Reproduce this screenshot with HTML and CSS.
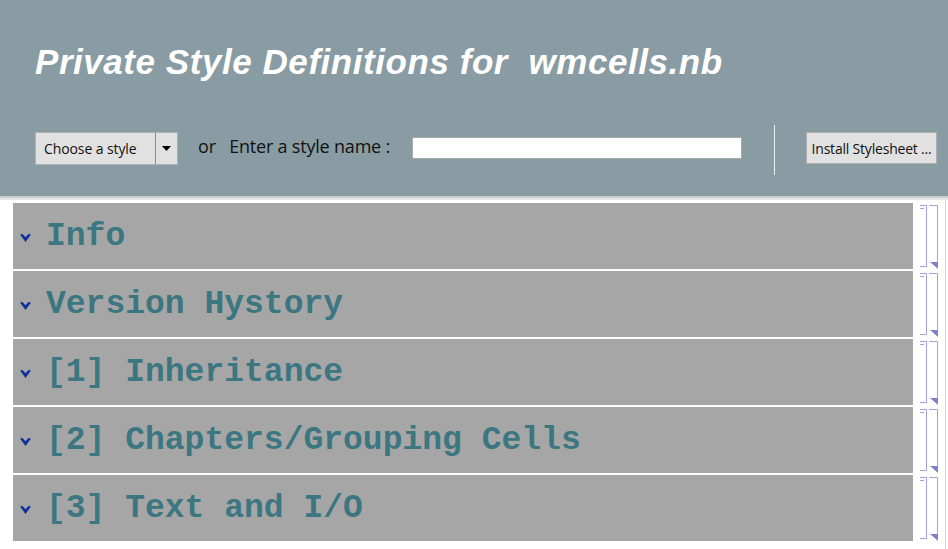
FILE: index.html
```html
<!DOCTYPE html>
<html>
<head>
<meta charset="utf-8">
<link rel="stylesheet" href="styles.css">
</head>
<body>
<div class="header">
  <h1 class="title">Private Style Definitions for&nbsp; wmcells.nb</h1>
  <div class="controls">
    <div class="popup">
      <span class="popup-label">Choose a style</span>
      <span class="popup-arrow"><svg width="9" height="5" viewBox="0 0 9 5"><path d="M0 0H9L4.5 5Z" fill="#000"/></svg></span>
    </div>
    <span class="or">or</span>
    <span class="enter">Enter a style name :</span>
    <div class="field"></div>
    <div class="divider"></div>
    <div class="install">Install Stylesheet ...</div>
  </div>
</div>
<div class="band1"></div>
<div class="band2"></div>
<div class="cells">
  <div class="row"><div class="cell"><svg class="chev" width="11" height="8" viewBox="0 0 11 8"><path d="M0 0.5L2.5 0L5.5 3.2L8.5 0L11 0.5L5.5 8Z" fill="#0f2f9a"/></svg><span class="name">Info</span></div><svg class="br" width="32" height="66" viewBox="0 0 32 66"><path d="M7 2.5H13.5V63.5H7M7 5.5H11" stroke="#a0a0dc" fill="none"/><path d="M16 2.5H24.5V64" stroke="#a0a0dc" fill="none"/><path d="M17 59H25V66Z" fill="#8080cc"/></svg></div>
  <div class="row"><div class="cell"><svg class="chev" width="11" height="8" viewBox="0 0 11 8"><path d="M0 0.5L2.5 0L5.5 3.2L8.5 0L11 0.5L5.5 8Z" fill="#0f2f9a"/></svg><span class="name">Version Hystory</span></div><svg class="br" width="32" height="66" viewBox="0 0 32 66"><path d="M7 2.5H13.5V63.5H7M7 5.5H11" stroke="#a0a0dc" fill="none"/><path d="M16 2.5H24.5V64" stroke="#a0a0dc" fill="none"/><path d="M17 59H25V66Z" fill="#8080cc"/></svg></div>
  <div class="row"><div class="cell"><svg class="chev" width="11" height="8" viewBox="0 0 11 8"><path d="M0 0.5L2.5 0L5.5 3.2L8.5 0L11 0.5L5.5 8Z" fill="#0f2f9a"/></svg><span class="name">[1] Inheritance</span></div><svg class="br" width="32" height="66" viewBox="0 0 32 66"><path d="M7 2.5H13.5V63.5H7M7 5.5H11" stroke="#a0a0dc" fill="none"/><path d="M16 2.5H24.5V64" stroke="#a0a0dc" fill="none"/><path d="M17 59H25V66Z" fill="#8080cc"/></svg></div>
  <div class="row"><div class="cell"><svg class="chev" width="11" height="8" viewBox="0 0 11 8"><path d="M0 0.5L2.5 0L5.5 3.2L8.5 0L11 0.5L5.5 8Z" fill="#0f2f9a"/></svg><span class="name">[2] Chapters/Grouping Cells</span></div><svg class="br" width="32" height="66" viewBox="0 0 32 66"><path d="M7 2.5H13.5V63.5H7M7 5.5H11" stroke="#a0a0dc" fill="none"/><path d="M16 2.5H24.5V64" stroke="#a0a0dc" fill="none"/><path d="M17 59H25V66Z" fill="#8080cc"/></svg></div>
  <div class="row"><div class="cell"><svg class="chev" width="11" height="8" viewBox="0 0 11 8"><path d="M0 0.5L2.5 0L5.5 3.2L8.5 0L11 0.5L5.5 8Z" fill="#0f2f9a"/></svg><span class="name">[3] Text and I/O</span></div><svg class="br" width="32" height="66" viewBox="0 0 32 66"><path d="M7 2.5H13.5V63.5H7M7 5.5H11" stroke="#a0a0dc" fill="none"/><path d="M16 2.5H24.5V64" stroke="#a0a0dc" fill="none"/><path d="M17 59H25V66Z" fill="#8080cc"/></svg></div>
</div>
<div class="scrollline"></div>
</body>
</html>
```
FILE: styles.css
```css
html, body {
  margin: 0;
  padding: 0;
  background: #ffffff;
  width: 948px;
  height: 549px;
  overflow: hidden;
  position: relative;
}
.header {
  height: 196px;
  background: #8a9ca3;
  box-sizing: border-box;
  padding: 40px 0 0 35px;
}
.title {
  margin: 0;
  font-family: "Liberation Sans", Arial, sans-serif;
  font-weight: bold;
  font-style: italic;
  font-size: 35px;
  line-height: 44px;
  color: #ffffff;
  letter-spacing: 0.55px;
}
.controls {
  display: flex;
  align-items: center;
  margin-top: 39px;
  height: 50px;
  font-family: "Open Sans", "Noto Sans", sans-serif;
}
.popup {
  display: flex;
  width: 143px;
  height: 33px;
  box-sizing: border-box;
  border: 1px solid #b0b0b0;
  background: #e1e1e1;
}
.popup-label {
  flex: 1;
  font-size: 14px;
  color: #111;
  display: flex;
  align-items: center;
  padding-left: 8px;
  letter-spacing: -0.1px;
  border-right: 1px solid #8a8a8a;
}
.popup-arrow {
  width: 21px;
  display: flex;
  align-items: center;
  justify-content: center;
}
.or {
  font-size: 18px;
  color: #111;
  margin-left: 20px;
  margin-top: -4px;
}
.enter {
  font-size: 18px;
  color: #111;
  margin-left: 13px;
  margin-top: -4px;
  letter-spacing: -0.2px;
}
.field {
  width: 330px;
  height: 22px;
  box-sizing: border-box;
  border: 1px solid #a8a8a8;
  background: #ffffff;
  margin-left: 22px;
}
.divider {
  width: 1px;
  height: 50px;
  background: #f0f0f0;
  margin-left: 32px;
  margin-top: 4px;
}
.install {
  margin-left: 31px;
  width: 131px;
  height: 32px;
  box-sizing: border-box;
  border: 1px solid #b0b0b0;
  background: #e1e1e1;
  font-size: 14px;
  color: #111;
  display: flex;
  align-items: center;
  justify-content: center;
  letter-spacing: -0.2px;
  white-space: nowrap;
}
.band1 {
  height: 2px;
  background: #c9cdd0;
}
.band2 {
  height: 2px;
  background: #e4e6e7;
}
.cells {
  padding: 3px 0 0 13px;
  display: flex;
  flex-direction: column;
  gap: 2px;
}
.row {
  display: flex;
  height: 66px;
}
.cell {
  width: 900px;
  height: 66px;
  background: #a6a6a6;
  display: flex;
  align-items: center;
}
.chev {
  margin-left: 7px;
  margin-top: 4px;
  flex: none;
}
.name {
  margin-left: 15px;
  font-family: "Liberation Mono", "Courier New", monospace;
  font-weight: bold;
  font-size: 33px;
  color: #3b7681;
  white-space: pre;
}
.br {
  flex: none;
  display: block;
}
.scrollline {
  position: absolute;
  left: 945px;
  top: 200px;
  width: 1px;
  height: 349px;
  background: #d6d6d6;
}
```
